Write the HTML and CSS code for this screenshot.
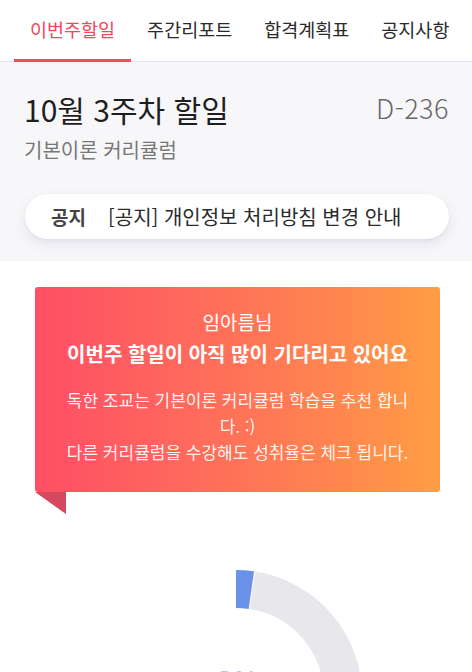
FILE: index.html
```html
<!DOCTYPE html>
<html lang="ko">
<head>
<meta charset="utf-8">
<title>이번주할일</title>
<link rel="stylesheet" href="styles.css">
</head>
<body>
<nav class="tabs">
  <a class="tab active">이번주할일</a>
  <a class="tab">주간리포트</a>
  <a class="tab">합격계획표</a>
  <a class="tab">공지사항</a>
</nav>
<header class="week">
  <div class="week-top">
    <div class="week-titles">
      <h1 class="week-title">10월 3주차 할일</h1>
      <p class="week-sub">기본이론 커리큘럼</p>
    </div>
    <span class="dday">D-236</span>
  </div>
  <div class="notice">
    <b class="notice-tag">공지</b>
    <span class="notice-text">[공지] 개인정보 처리방침 변경 안내</span>
  </div>
</header>
<section class="banner-wrap">
  <div class="banner">
    <p class="banner-name">임아름님</p>
    <p class="banner-head">이번주 할일이 아직 많이 기다리고 있어요</p>
    <p class="banner-body">독한 조교는 기본이론 커리큘럼 학습을 추천 합니다. :)<br>다른 커리큘럼을 수강해도 성취율은 체크 됩니다.</p>
  </div>
</section>
<section class="chart">
  <svg class="donut" width="260" height="260" viewBox="0 0 260 260">
    <g transform="rotate(-90 130 130)">
      <circle cx="130" cy="130" r="107" fill="none" stroke="#e8e7eb" stroke-width="38" stroke-dasharray="0 16.4 319.7 400"></circle>
      <circle cx="130" cy="130" r="107" fill="none" stroke="#6a93e8" stroke-width="38" stroke-dasharray="15.5 700"></circle>
    </g>
    <text x="131" y="127" text-anchor="middle" class="donut-label">3%</text>
  </svg>
</section>
</body>
</html>
```
FILE: styles.css
```css
* { box-sizing: border-box; }
html, body { margin: 0; padding: 0; }
body {
  width: 472px;
  background: #ffffff;
  font-family: "Noto Sans CJK KR", "Noto Sans", sans-serif;
  color: #222;
  overflow: hidden;
}
p, h1 { margin: 0; }

.tabs {
  display: flex;
  height: 62px;
  padding-left: 14px;
  background: #fff;
  border-bottom: 1px solid #e4e3ef;
}
.tab {
  position: relative;
  display: flex;
  align-items: center;
  padding: 0 16px 4px;
  font-size: 18.5px;
  color: #2a2a2a;
  text-decoration: none;
  white-space: nowrap;
}
.tab.active { color: #f0475c; }
.tab.active::after {
  content: "";
  position: absolute;
  left: 0;
  right: 0;
  bottom: -1px;
  height: 3px;
  background: #f04b5f;
}

.week {
  background: #f7f7f9;
  padding: 29px 23px 22px 24px;
}
.week-top {
  display: flex;
  justify-content: space-between;
  align-items: flex-start;
}
.week-title {
  font-size: 30px;
  font-weight: 400;
  line-height: 36px;
  color: #1e1e1e;
}
.week-sub {
  margin-top: 10px;
  font-size: 20px;
  line-height: 26px;
  color: #777;
}
.dday {
  font-size: 27px;
  font-weight: 300;
  line-height: 34px;
  color: #676767;
  letter-spacing: 0.5px;
}
.notice {
  display: flex;
  align-items: center;
  gap: 22px;
  height: 45px;
  margin-top: 31px;
  margin-left: 1px;
  padding-left: 26px;
  background: #fff;
  border-radius: 23px;
  box-shadow: 0 5px 12px rgba(80, 70, 140, 0.12), 0 1px 3px rgba(80, 70, 140, 0.06);
}
.notice-tag {
  font-size: 19px;
  font-weight: 700;
  color: #444;
}
.notice-text {
  font-size: 20px;
  color: #2b2b2b;
  white-space: nowrap;
}

.banner-wrap {
  padding: 26px 32px 0 35px;
}
.banner {
  position: relative;
  padding: 22px 26px 27px;
  border-radius: 3px;
  background: linear-gradient(90deg, #ff4e65 0%, #ff6b5c 40%, #ff8250 70%, #ff9d44 100%);
  color: #fff;
  text-align: center;
}
.banner::after {
  content: "";
  position: absolute;
  left: 0;
  bottom: -22px;
  width: 31px;
  height: 22px;
  background: #d6485e;
  clip-path: polygon(0 0, 100% 0, 100% 100%);
}
.banner-name {
  font-size: 19px;
  line-height: 26px;
}
.banner-head {
  margin-top: 6px;
  font-size: 20px;
  line-height: 26px;
  font-weight: 700;
  white-space: nowrap;
}
.banner-body {
  margin-top: 20px;
  font-size: 17px;
  line-height: 26px;
  color: rgba(255, 255, 255, 0.93);
}

.chart {
  display: flex;
  justify-content: center;
  padding-top: 74px;
}
.donut { display: block; }
.donut-label {
  font-family: "Noto Sans", sans-serif;
  font-size: 30px;
  fill: #b6c2d6;
}
```
